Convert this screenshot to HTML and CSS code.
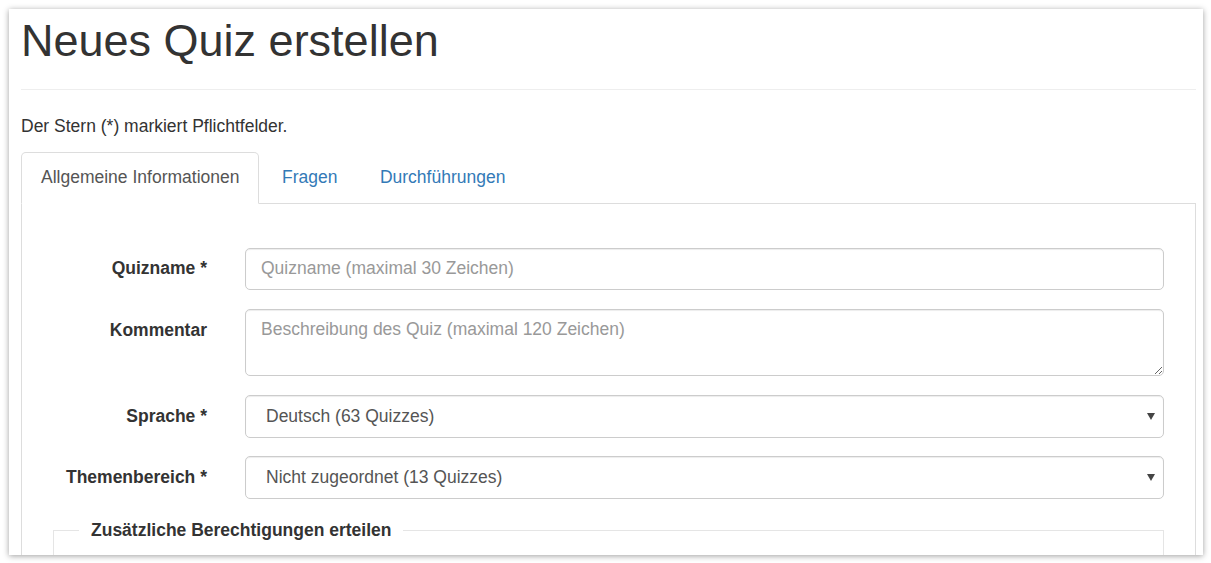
FILE: index.html
```
<!DOCTYPE html>
<html lang="de">
<head>
<meta charset="utf-8">
<title>Neues Quiz erstellen</title>
<link rel="stylesheet" href="styles.css">
</head>
<body>
<div class="card">
  <div class="page-header">
    <h1>Neues Quiz erstellen</h1>
  </div>
  <p class="hint">Der Stern (*) markiert Pflichtfelder.</p>
  <ul class="tabs">
    <li class="tab active"><a>Allgemeine Informationen</a></li>
    <li class="tab"><a>Fragen</a></li>
    <li class="tab"><a>Durchführungen</a></li>
  </ul>
  <div class="panel">
    <form class="form">
      <div class="row">
        <label class="label" for="qn">Quizname *</label>
        <input id="qn" class="control" type="text" placeholder="Quizname (maximal 30 Zeichen)">
      </div>
      <div class="row">
        <label class="label" for="km">Kommentar</label>
        <textarea id="km" class="control area" rows="2" placeholder="Beschreibung des Quiz (maximal 120 Zeichen)"></textarea>
      </div>
      <div class="row">
        <label class="label" for="sp">Sprache *</label>
        <div class="select-wrap">
          <select id="sp" class="control select">
            <option>Deutsch (63 Quizzes)</option>
          </select>
          <span class="caret"></span>
        </div>
      </div>
      <div class="row">
        <label class="label" for="tb">Themenbereich *</label>
        <div class="select-wrap">
          <select id="tb" class="control select">
            <option>Nicht zugeordnet (13 Quizzes)</option>
          </select>
          <span class="caret"></span>
        </div>
      </div>
      <fieldset class="fieldset">
        <legend class="legend">Zusätzliche Berechtigungen erteilen</legend>
        <div class="fs-body"></div>
      </fieldset>
    </form>
  </div>
</div>
</body>
</html>
```
FILE: styles.css
```
html, body {
  margin: 0;
  padding: 0;
  background: #ffffff;
  height: 100%;
  overflow: hidden;
}
body {
  font-family: "Liberation Sans", Arial, Helvetica, sans-serif;
  font-size: 17.5px;
  line-height: 25px;
  color: #333333;
}
.card {
  margin: 9px 8px 0 9px;
  height: 546px;
  background: #ffffff;
  box-shadow: 0 1px 6px rgba(0, 0, 0, 0.38);
  padding: 7px 7px 0 12px;
  box-sizing: border-box;
  overflow: hidden;
}
.page-header {
  border-bottom: 1px solid #eeeeee;
  padding-bottom: 11px;
  margin-bottom: 24px;
}
h1 {
  margin: 0 0 12.5px 0;
  font-size: 45px;
  line-height: 49.5px;
  font-weight: 500;
  color: #333333;
}
.hint {
  margin: 0 0 12.5px 0;
}
.tabs {
  list-style: none;
  margin: 0;
  padding: 0;
  display: flex;
  border-bottom: 1px solid #dddddd;
}
.tab {
  margin-bottom: -1px;
  margin-right: 2.5px;
}
.tab a {
  display: block;
  padding: 12.5px 19px;
  border: 1px solid transparent;
  border-radius: 5px 5px 0 0;
  color: #337ab7;
  cursor: pointer;
}
.tab.active a {
  color: #555555;
  background: #ffffff;
  border-color: #dddddd #dddddd transparent #dddddd;
}
.panel {
  border: 1px solid #dddddd;
  border-top: 0;
  padding: 44px 31px 40px 31px;
}
.row {
  display: flex;
  gap: 38px;
  margin-bottom: 18.75px;
}
.label {
  width: 154px;
  flex: none;
  text-align: right;
  font-weight: bold;
  padding-top: 8.75px;
  box-sizing: border-box;
}
.control {
  flex: 1;
  display: block;
  height: 42.5px;
  padding: 7.5px 15px;
  font-family: inherit;
  font-size: 17.5px;
  line-height: 25px;
  color: #555555;
  background: #ffffff;
  border: 1px solid #cccccc;
  border-radius: 5px;
  box-shadow: inset 0 1px 1px rgba(0, 0, 0, 0.075);
  box-sizing: border-box;
  margin: 0;
  width: 100%;
}
.control::placeholder {
  color: #999999;
  opacity: 1;
}
.area {
  height: 67.5px;
  resize: vertical;
}
.select-wrap {
  flex: 1;
  position: relative;
}
.select {
  appearance: none;
  -webkit-appearance: none;
  padding-left: 20px;
}
.caret {
  position: absolute;
  right: 9px;
  top: 18px;
  width: 0;
  height: 0;
  border-left: 4px solid transparent;
  border-right: 4px solid transparent;
  border-top: 7px solid #444444;
  pointer-events: none;
}
.fieldset {
  margin: 0;
  border: 1px solid #e5e5e5;
  padding: 0 25px 20px 25px;
  min-height: 60px;
}
.legend {
  padding: 0 12px;
  font-weight: bold;
  color: #333333;
}
```
